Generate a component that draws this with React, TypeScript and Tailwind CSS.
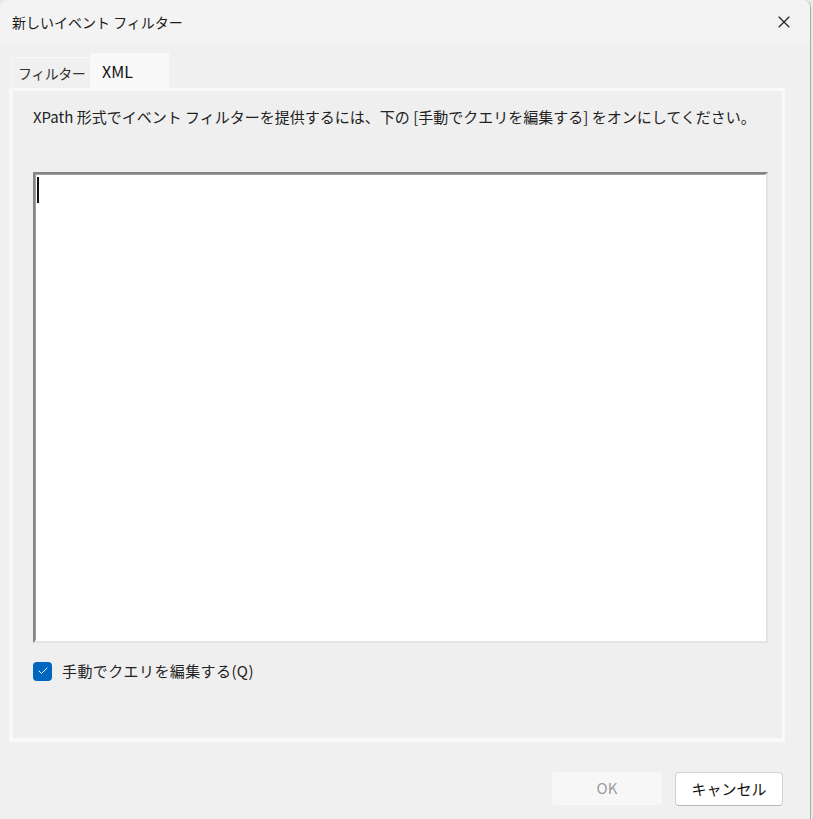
import { Check, X } from 'lucide-react';

const jp = { fontFamily: '"Noto Sans CJK JP", "Noto Sans", sans-serif' };

export default function App() {
  return (
    <div className="flex h-[819px] w-[813px] bg-[#e8e8e8]" style={jp}>
      <div className="flex h-full w-[811px] flex-col overflow-hidden rounded-t-lg border-r border-[#a8a8a8] bg-[#f0f0f0]">
        {/* title bar */}
        <div className="flex h-[44px] shrink-0 items-center justify-between bg-[#f3f3f3] pl-3 pr-[16px]">
          <span className="text-[14px] text-[#1a1a1a]">新しいイベント フィルター</span>
          <X size={20} strokeWidth={1.4} className="text-[#222]" />
        </div>

        {/* tabs */}
        <div className="mt-[9px] flex h-[35px] items-end pl-[11px]">
          <div className="flex h-[31px] w-[80px] items-center whitespace-nowrap border border-b-0 border-[#f8f8f8] pl-[6px] text-[14px] tracking-[-0.5px] text-[#333]">
            フィルター
          </div>
          <div className="flex h-[35px] w-[78px] items-center bg-[#f9f9f9] pl-[11px] text-[16px] text-[#111]">
            XML
          </div>
        </div>

        {/* panel */}
        <div className="ml-[9px] h-[654px] w-[776px] bg-[#f9f9f9] p-[3px] pb-[4px] pl-[4px]">
          <div className="flex h-full flex-col bg-[#efefef] px-[20px]">
            <p className="mt-[15px] whitespace-nowrap text-[15px] leading-[22px] text-[#222]">
              XPath 形式でイベント フィルターを提供するには、下の [手動でクエリを編集する] をオンにしてください。
            </p>

            <div className="mt-[44px] h-[471px] w-[735px] border-2 border-t-[#858585] border-l-[#858585] border-r-[#e4e4e4] border-b-[#e4e4e4] bg-white">
              <div className="h-full w-full border border-t-[#a0a0a0] border-l-[#a0a0a0] border-r-white border-b-white pl-[1px] pt-[2px]">
                <div className="h-[26px] w-[2px] bg-[#111]" />
              </div>
            </div>

            <label className="mt-[17px] flex items-center gap-[10px]">
              <span className="flex h-[19px] w-[19px] items-center justify-center rounded-[4px] bg-[#0067c0]">
                <Check size={12} strokeWidth={2} className="text-white" />
              </span>
              <span className="text-[15px] tracking-[0.4px] text-[#222]">手動でクエリを編集する(Q)</span>
            </label>
          </div>
        </div>

        {/* buttons */}
        <div className="mt-[30px] flex justify-end gap-[13px] pr-[27px]">
          <button
            type="button"
            disabled
            className="h-[33px] w-[110px] rounded-[4px] bg-[#f7f7f7] text-[15px] text-[#9d9d9d]"
          >
            OK
          </button>
          <button
            type="button"
            className="h-[34px] w-[108px] rounded-[4px] border border-[#d2d2d2] border-b-[#b8b8b8] bg-white text-[15px] text-[#111]"
          >
            キャンセル
          </button>
        </div>
      </div>
    </div>
  );
}
